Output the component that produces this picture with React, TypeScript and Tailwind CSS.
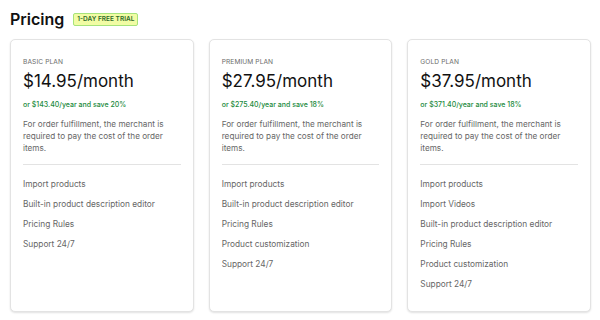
import React from 'react';

type Plan = {
  name: string;
  price: string;
  yearly: string;
  features: string[];
};

const plans: Plan[] = [
  {
    name: 'Basic Plan',
    price: '$14.95/month',
    yearly: 'or $143.40/year and save 20%',
    features: ['Import products', 'Built-in product description editor', 'Pricing Rules', 'Support 24/7'],
  },
  {
    name: 'Premium Plan',
    price: '$27.95/month',
    yearly: 'or $275.40/year and save 18%',
    features: [
      'Import products',
      'Built-in product description editor',
      'Pricing Rules',
      'Product customization',
      'Support 24/7',
    ],
  },
  {
    name: 'Gold Plan',
    price: '$37.95/month',
    yearly: 'or $371.40/year and save 18%',
    features: [
      'Import products',
      'Import Videos',
      'Built-in product description editor',
      'Pricing Rules',
      'Product customization',
      'Support 24/7',
    ],
  },
];

const PlanCard: React.FC<{ plan: Plan }> = ({ plan }) => (
  <div className="flex-1 rounded-[5px] border border-[#e3e3e3] bg-white px-3 pt-[17px] shadow-[0_1px_2px_rgba(0,0,0,0.12)]">
    <p className="text-[6.6px] uppercase leading-[10px] tracking-[0.1px] text-[#6b6b6b]">{plan.name}</p>
    <p className="mt-[2px] text-[17px] leading-[24px] text-[#111]">{plan.price}</p>
    <p className="mt-[7px] text-[7px] font-medium leading-[10px] text-[#1a8a3c]">{plan.yearly}</p>
    <p className="mt-[8px] text-[8.2px] leading-[12px] text-[#666]">
      For order fulfillment, the merchant is required to pay the cost of the order items.
    </p>
    <div className="mt-[10px] h-px bg-[#e3e3e3]" />
    <ul className="mt-[14px] flex flex-col gap-[10px]">
      {plan.features.map((f) => (
        <li key={f} className="text-[8.3px] leading-[10px] text-[#666]">
          {f}
        </li>
      ))}
    </ul>
  </div>
);

const App: React.FC = () => {
  return (
    <div className="h-[320px] w-[600px] bg-white pl-[10px] pr-[9px] font-['Inter',sans-serif]">
      <div className="flex items-center gap-[9px] pt-[7px]">
        <h1 className="text-[16px] font-semibold leading-[24px] text-[#111]">Pricing</h1>
        <span className="rounded-[2px] border border-[#a6e37a] bg-[#f1fca4] px-[3px] text-[6.5px] font-semibold leading-[11px] text-[#2e6a2a]">
          1-DAY FREE TRIAL
        </span>
      </div>
      <div className="mt-[8px] flex h-[273px] gap-[15px]">
        {plans.map((p) => (
          <PlanCard key={p.name} plan={p} />
        ))}
      </div>
    </div>
  );
};

export default App;
